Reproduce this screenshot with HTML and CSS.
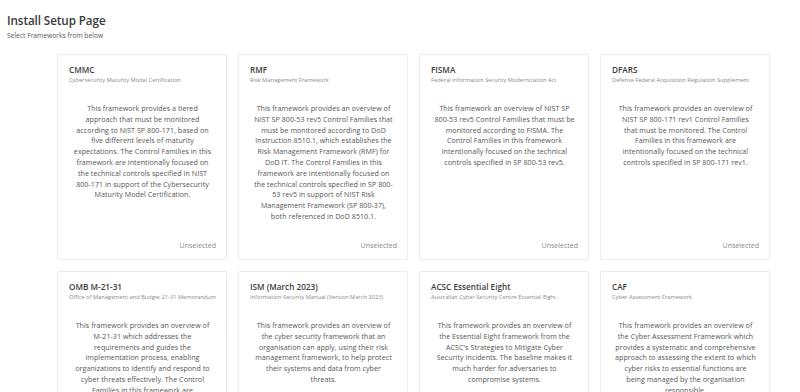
FILE: index.html
```html
<!DOCTYPE html>
<html>
<head>
<meta charset="utf-8">
<link rel="stylesheet" href="styles.css">
</head>
<body>
<header class="page-head">
  <h1 class="page-title">Install Setup Page</h1>
  <p class="page-sub">Select Frameworks from below</p>
</header>
<main class="grid">
  <section class="card">
    <h2 class="card-title">CMMC</h2>
    <p class="card-sub">Cybersecurity Maturity Model Certification</p>
    <p class="card-desc">This framework provides a tiered approach that must be monitored according to NIST SP 800-171, based on five different levels of maturity expectations. The Control Families in this framework are intentionally focused on the technical controls specified in NIST 800-171 in support of the Cybersecurity Maturity Model Certification.</p>
    <div class="card-status">Unselected</div>
  </section>
  <section class="card">
    <h2 class="card-title">RMF</h2>
    <p class="card-sub">Risk Management Framework</p>
    <p class="card-desc">This framework provides an overview of NIST SP 800-53 rev5 Control Families that must be monitored according to DoD Instruction 8510.1, which establishes the Risk Management Framework (RMF) for DoD IT. The Control Families in this framework are intentionally focused on the technical controls specified in SP 800-53 rev5 in support of NIST Risk Management Framework (SP 800-37), both referenced in DoD 8510.1.</p>
    <div class="card-status">Unselected</div>
  </section>
  <section class="card">
    <h2 class="card-title">FISMA</h2>
    <p class="card-sub">Federal Information Security Modernization Act</p>
    <p class="card-desc">This framework an overview of NIST SP 800-53 rev5 Control Families that must be monitored according to FISMA. The Control Families in this framework intentionally focused on the technical controls specified in SP 800-53 rev5.</p>
    <div class="card-status">Unselected</div>
  </section>
  <section class="card">
    <h2 class="card-title">DFARS</h2>
    <p class="card-sub">Defense Federal Acquisition Regulation Supplement</p>
    <p class="card-desc">This framework provides an overview of NIST SP 800-171 rev1 Control Families that must be monitored. The Control Families in this framework are intentionally focused on the technical controls specified in SP 800-171 rev1.</p>
    <div class="card-status">Unselected</div>
  </section>
  <section class="card">
    <h2 class="card-title">OMB M-21-31</h2>
    <p class="card-sub">Office of Management and Budget 21-31 Memorandum</p>
    <p class="card-desc">This framework provides an overview of M-21-31 which addresses the requirements and guides the implementation process, enabling organizations to identify and respond to cyber threats effectively. The Control Families in this framework are intentionally focused on the technical controls specified in SP 800-53 rev5.</p>
    <div class="card-status">Unselected</div>
  </section>
  <section class="card">
    <h2 class="card-title">ISM (March 2023)</h2>
    <p class="card-sub">Information Security Manual (Version March 2023)</p>
    <p class="card-desc">This framework provides an overview of the cyber security framework that an organisation can apply, using their risk management framework, to help protect their systems and data from cyber threats.</p>
    <div class="card-status">Unselected</div>
  </section>
  <section class="card">
    <h2 class="card-title">ACSC Essential Eight</h2>
    <p class="card-sub">Australian Cyber Security Centre Essential Eight</p>
    <p class="card-desc">This framework provides an overview of the Essential Eight framework from the ACSC's Strategies to Mitigate Cyber Security Incidents. The baseline makes it much harder for adversaries to compromise systems.</p>
    <div class="card-status">Unselected</div>
  </section>
  <section class="card">
    <h2 class="card-title">CAF</h2>
    <p class="card-sub">Cyber Assessment Framework</p>
    <p class="card-desc">This framework provides an overview of the Cyber Assessment Framework which provides a systematic and comprehensive approach to assessing the extent to which cyber risks to essential functions are being managed by the organisation responsible.</p>
    <div class="card-status">Unselected</div>
  </section>
</main>
</body>
</html>
```
FILE: styles.css
```css
html, body {
  margin: 0;
  padding: 0;
  background: #ffffff;
}
body {
  font-family: "Open Sans", "Lato", sans-serif;
  color: #333;
  overflow: hidden;
  height: 392px;
}
.page-head {
  padding: 12px 0 0 7px;
}
.page-title {
  margin: 0;
  font-size: 11.7px;
  font-weight: 600;
  color: #3a3a3a;
  line-height: 17px;
  letter-spacing: -0.1px;
}
.page-sub {
  margin: 2px 0 0;
  font-size: 6.7px;
  color: #555;
  line-height: 9px;
}
.grid {
  display: grid;
  grid-template-columns: repeat(4, 170px);
  column-gap: 11px;
  row-gap: 11px;
  padding: 14px 0 0 57px;
}
.card {
  border: 1px solid #ececec;
  border-radius: 2px;
  box-shadow: 0 0 2px rgba(0,0,0,0.04);
  background: #fff;
  padding: 10px 10px 9px 11px;
  height: 206px;
  box-sizing: border-box;
  display: flex;
  flex-direction: column;
}
.card-title {
  margin: 0;
  font-size: 8.2px;
  font-weight: 600;
  color: #3d3d3d;
  line-height: 10px;
}
.card-sub {
  margin: 1px 0 0;
  font-size: 5.7px;
  color: #8a8a8a;
  line-height: 8px;
  white-space: nowrap;
}
.card-desc {
  margin: 19px 3px 0 3px;
  font-size: 7.1px;
  letter-spacing: 0.05px;
  line-height: 10.8px;
  color: #555;
  text-align: center;
  flex: 1;
}
.card-status {
  text-align: right;
  font-size: 7px;
  color: #8a8a8a;
  line-height: 9px;
}
```
